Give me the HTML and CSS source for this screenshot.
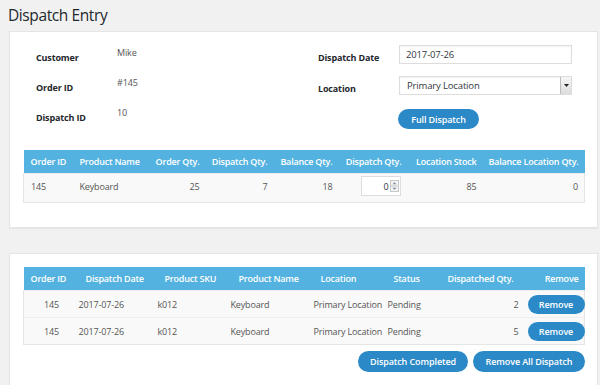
FILE: index.html
```html
<!DOCTYPE html>
<html>
<head>
<meta charset="utf-8">
<link rel="stylesheet" href="styles.css">
</head>
<body>
<h1 class="title">Dispatch Entry</h1>

<section class="card card-top">
  <div class="form">
    <div class="col col-left">
      <div class="row"><span class="lbl">Customer</span><span class="val">Mike</span></div>
      <div class="row"><span class="lbl">Order ID</span><span class="val">#145</span></div>
      <div class="row"><span class="lbl">Dispatch ID</span><span class="val">10</span></div>
    </div>
    <div class="col col-right">
      <div class="row"><span class="lbl">Dispatch Date</span><div class="field">2017-07-26</div></div>
      <div class="row"><span class="lbl">Location</span><div class="field select"><span class="sel-text">Primary Location</span><span class="sel-btn"><svg width="5" height="3" viewBox="0 0 5 3"><path d="M0 0H5L2.5 3Z" fill="#222"/></svg></span></div></div>
      <div class="row row-btn"><span class="lbl"></span><button class="btn btn-full">Full Dispatch</button></div>
    </div>
  </div>

  <table class="tbl tbl1">
    <colgroup>
      <col style="width:50px"><col style="width:74px"><col style="width:58px"><col style="width:68px"><col style="width:65px"><col style="width:69px"><col style="width:75px"><col style="width:102px">
    </colgroup>
    <thead>
      <tr><th class="l">Order ID</th><th class="l">Product Name</th><th class="r">Order Qty.</th><th class="r">Dispatch Qty.</th><th class="r">Balance Qty.</th><th class="r">Dispatch Qty.</th><th class="r">Location Stock</th><th class="r">Balance Location Qty.</th></tr>
    </thead>
    <tbody>
      <tr><td class="l">145</td><td class="l">Keyboard</td><td class="r">25</td><td class="r">7</td><td class="r">18</td><td class="r"><span class="num"><span class="num-v">0</span><span class="spin"><svg width="9" height="12" viewBox="0 0 9 12"><rect x="0.5" y="0.5" width="8" height="11" fill="#f3f3f3" stroke="#c8c8c8"/><line x1="1" y1="6" x2="8" y2="6" stroke="#c8c8c8"/><path d="M2.5 4.2H6.5L4.5 2.2Z" fill="#7a8aa0"/><path d="M2.5 7.8H6.5L4.5 9.8Z" fill="#7a8aa0"/></svg></span></span></td><td class="r">85</td><td class="r">0</td></tr>
    </tbody>
  </table>
</section>

<section class="card card-bottom">
  <table class="tbl tbl2">
    <colgroup>
      <col style="width:49px"><col style="width:79px"><col style="width:73px"><col style="width:83px"><col style="width:74px"><col style="width:39px"><col style="width:104px"><col style="width:60px">
    </colgroup>
    <thead>
      <tr><th class="h1">Order ID</th><th class="h2">Dispatch Date</th><th class="h3">Product SKU</th><th class="h4">Product Name</th><th class="h5">Location</th><th class="h6">Status</th><th class="h7">Dispatched Qty.</th><th class="r">Remove</th></tr>
    </thead>
    <tbody>
      <tr><td class="id">145</td><td class="l">2017-07-26</td><td class="l">k012</td><td class="l">Keyboard</td><td class="l">Primary Location</td><td class="l">Pending</td><td class="r">2</td><td class="btn-cell"><button class="btn btn-rm">Remove</button></td></tr>
      <tr><td class="id">145</td><td class="l">2017-07-26</td><td class="l">k012</td><td class="l">Keyboard</td><td class="l">Primary Location</td><td class="l">Pending</td><td class="r">5</td><td class="btn-cell"><button class="btn btn-rm">Remove</button></td></tr>
    </tbody>
  </table>
  <div class="actions">
    <button class="btn btn-act btn-dc">Dispatch Completed</button>
    <button class="btn btn-act btn-ra">Remove All Dispatch</button>
  </div>
</section>
</body>
</html>
```

FILE: styles.css
```css
html, body {
  margin: 0;
  padding: 0;
  background: #f1f1f1;
  font-family: "Open Sans", "Noto Sans", sans-serif;
  font-size: 9px;
  letter-spacing: -0.15px;
  color: #555;
  overflow: hidden;
}
body {
  padding: 0 3px 0 9px;
}
.title {
  margin: 0;
  padding: 3px 0 0 0;
  margin-left: -1px;
  font-size: 15.5px;
  letter-spacing: -0.4px;
  font-weight: 400;
  color: #23282d;
  height: 28px;
  line-height: 24px;
}
.card {
  background: #fff;
  border: 1px solid #e5e5e5;
  box-shadow: 0 1px 1px rgba(0,0,0,.04);
  padding: 0 13px 0 13px;
  box-sizing: border-box;
  width: 589px;
}
.card-top {
  height: 197px;
  padding-top: 9px;
}
.card-bottom {
  margin-top: 25px;
  padding-top: 13px;
  height: 140px;
}
.form {
  display: flex;
  padding-left: 13px;
  height: 108px;
}
.col-left { width: 282px; }
.row {
  display: flex;
  height: 30px;
}
.col-left .lbl {
  width: 81px;
  padding-top: 10px;
}
.col-left .val {
  padding-top: 5px;
  color: #555;
}
.lbl {
  font-weight: 700;
  color: #23282d;
}
.col-right .lbl {
  width: 81px;
  padding-top: 10px;
}
.col-right .row { height: 31px; }
.field {
  margin-top: 4px;
  width: 173px;
  height: 19px;
  box-sizing: border-box;
  border: 1px solid #ddd;
  box-shadow: inset 0 1px 2px rgba(0,0,0,.05);
  padding: 0 6px;
  line-height: 17px;
  font-size: 9.5px;
  color: #32373c;
}
.select {
  display: flex;
  justify-content: space-between;
  padding-right: 0;
  margin-top: 4px;
}
.sel-text { padding-left: 1px; }
.sel-btn {
  width: 11px;
  height: 17px;
  box-sizing: border-box;
  border-left: 1px solid #bbb;
  background: linear-gradient(#f6f6f6, #dcdcdc);
  display: flex;
  align-items: center;
  justify-content: center;
}
.row-btn .btn-full { margin-top: 6px; margin-left: -1px; }
.btn {
  font-family: inherit;
  background: #2b89c7;
  color: #fff;
  border: none;
  border-radius: 11px;
  font-weight: 600;
  font-size: 9px;
  letter-spacing: -0.1px;
  padding: 0;
  cursor: pointer;
}
.btn-full { width: 81px; height: 20px; }
.tbl {
  border-collapse: collapse;
  table-layout: fixed;
  width: 561px;
  margin-left: 0;
}
.tbl1 { margin-top: 1px; }
.tbl th {
  background: #53b2e0;
  color: #fff;
  font-weight: 600;
  height: 23px;
  padding: 0 6px;
  white-space: nowrap;
  letter-spacing: -0.2px;
}
.tbl td {
  background: #f9f9f9;
  padding: 0 6px;
  white-space: nowrap;
  border-top: 1px solid #eee;
}
.tbl tbody tr:last-child td { border-bottom: 1px solid #e5e5e5; }
.tbl td:first-child { border-left: 1px solid #e5e5e5; }
.tbl td:last-child { border-right: 1px solid #e5e5e5; }
.tbl1 td { height: 24px; padding-bottom: 4px; }
.tbl1 th:first-child, .tbl1 td:first-child { padding-left: 7px; }
.tbl2 td { height: 26px; }
.l { text-align: left; }
.r { text-align: right; }
.c { text-align: center; }
.tbl2 th { text-align: left; }
.tbl2 th.r { text-align: right; }
.tbl2 .h1 { padding-left: 7px; }
.tbl2 .h2 { padding-left: 13px; }
.tbl2 .h3 { padding-left: 13px; }
.tbl2 .h4 { padding-left: 14px; }
.tbl2 .h5 { padding-left: 13px; }
.tbl2 .h6 { padding-left: 12px; padding-right: 0; }
.tbl2 .h7 { padding-left: 27px; padding-right: 0; }
.tbl2 td.id { padding-left: 20px; }
.num {
  display: inline-flex;
  align-items: center;
  justify-content: flex-end;
  width: 40px;
  height: 20px;
  box-sizing: border-box;
  border: 1px solid #ddd;
  padding-right: 1px;
  vertical-align: middle;
  background: #fff;
  margin-right: 1px;
}
.num-v { margin-right: 1px; color: #32373c; }
.spin { display: flex; }
.tbl2 td.btn-cell { padding: 0 0 0 3px; text-align: left; }
.btn-rm { width: 57px; height: 19px; }
.actions {
  display: flex;
  justify-content: flex-end;
  gap: 5px;
  margin-top: 6px;
  width: 562px;
}
.btn-act { height: 21px; }
.btn-dc { width: 110px; }
.btn-ra { width: 112px; }
```
